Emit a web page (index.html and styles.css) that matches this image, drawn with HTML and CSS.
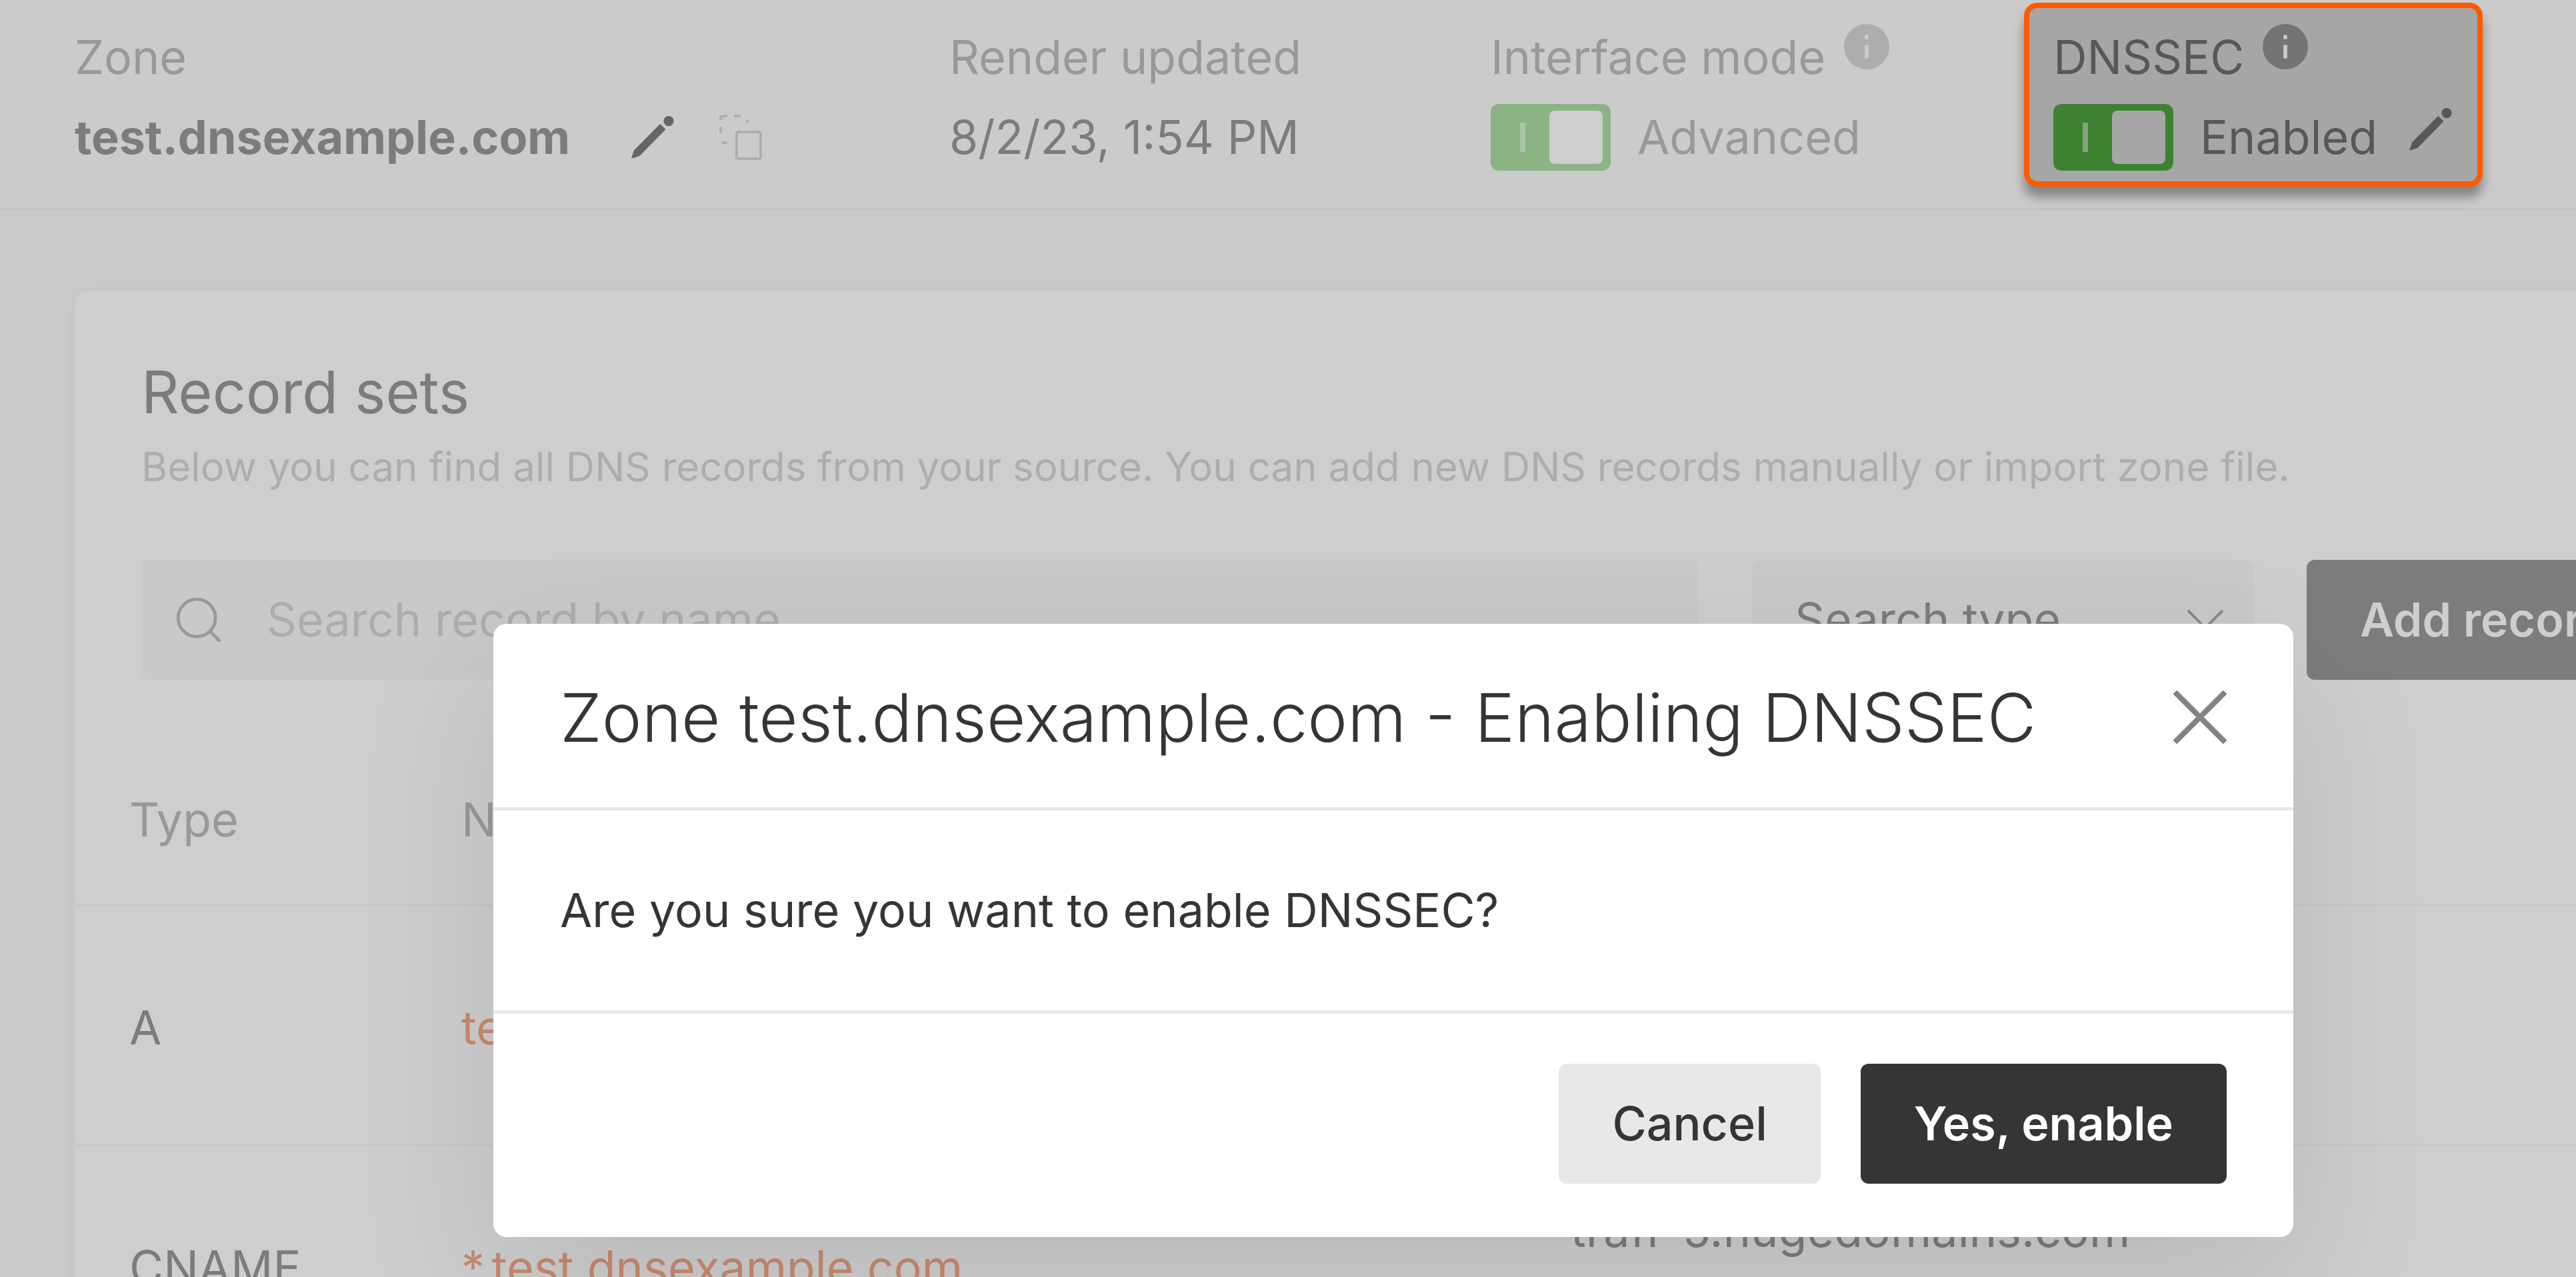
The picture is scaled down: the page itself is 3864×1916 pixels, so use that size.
FILE: index.html
```html
<!DOCTYPE html>
<html lang="en">
<head>
<meta charset="utf-8">
<title>DNS zone - test.dnsexample.com</title>
<link rel="stylesheet" href="styles.css">
</head>
<body>
<svg class="sprite" aria-hidden="true">
  <symbol id="icon-pencil" viewBox="0 0 16 16"><path d="M0 16 1 12.9 10.8 3 12.9 5 3.1 15Z"/><circle cx="14" cy="1.9" r="1.9"/></symbol>
  <symbol id="icon-info" viewBox="0 0 17 17"><circle cx="8.5" cy="8.5" r="8.5"/><path class="info-mark" d="M7.8 4.1h1.4v1.6H7.8ZM7.8 7.9h1.4v5H7.8Z"/></symbol>
</svg>

<header class="zone-bar">
  <div class="field">
    <span class="label">Zone</span>
    <div class="row">
      <strong class="zone-name">test.dnsexample.com</strong>
      <button class="icon-btn edit" aria-label="Rename zone"><svg class="icon"><use href="#icon-pencil"/></svg></button>
      <button class="icon-btn copy" aria-label="Copy zone name">
        <svg class="icon" viewBox="0 0 16 17"><rect x="6.5" y="6.5" width="9" height="10" rx=".6"/><path d="M.5 2V1.5Q.5.5 1.5.5H3M5.5.5h2.5M10 2.5h1M.5 4.5V7M1 10.5h2"/></svg>
      </button>
    </div>
  </div>
  <div class="field">
    <span class="label">Render updated</span>
    <div class="row">8/2/23, 1:54 PM</div>
  </div>
  <div class="field muted">
    <span class="label">Interface mode <svg class="info"><use href="#icon-info"/></svg></span>
    <label class="row"><input class="toggle" type="checkbox" checked>Advanced</label>
  </div>
  <div class="field highlight">
    <span class="label">DNSSEC <svg class="info"><use href="#icon-info"/></svg></span>
    <div class="row">
      <label class="row"><input class="toggle" type="checkbox" checked>Enabled</label>
      <button class="icon-btn edit raised" aria-label="Edit DNSSEC"><svg class="icon"><use href="#icon-pencil"/></svg></button>
    </div>
  </div>
</header>

<main class="card">
  <h1 class="card-title">Record sets</h1>
  <p class="card-text">Below you can find all DNS records from your source. You can add new DNS records manually or import zone file.</p>
  <div class="toolbar">
    <div class="search">
      <svg class="search-icon" viewBox="0 0 17 17"><circle cx="7.8" cy="7.8" r="7"/><path d="m12.8 12.8 3.7 3.8"/></svg>
      <input class="search-input" type="text" placeholder="Search record by name" aria-label="Search record by name">
    </div>
    <div class="select-box">
      <select class="select" aria-label="Search type"><option>Search type</option></select>
      <svg class="chevron" viewBox="0 0 14 8"><path d="m.5.5 6.5 6.5 6.5-6.5"/></svg>
    </div>
    <button class="btn btn-add">Add record</button>
  </div>
  <table class="records">
    <thead>
      <tr><th class="col-type">Type</th><th class="col-name">Name</th><th>Content</th></tr>
    </thead>
    <tbody>
      <tr><td>A</td><td><a href="#">test.dnsexample.com</a></td><td></td></tr>
      <tr><td>CNAME</td><td><a href="#">*.test.dnsexample.com</a></td><td>traff-5.hugedomains.com<br>traff-6.hugedomains.com</td></tr>
    </tbody>
  </table>
</main>

<div class="overlay">
  <section class="modal" role="dialog" aria-labelledby="modal-title">
    <header class="modal-head">
      <h2 class="modal-title" id="modal-title">Zone test.dnsexample.com - Enabling DNSSEC</h2>
      <button class="close" aria-label="Close"><svg class="close-icon" viewBox="0 0 20 20"><path d="m.6.6 18.8 18.8M19.4.6.6 19.4"/></svg></button>
    </header>
    <p class="modal-body">Are you sure you want to enable DNSSEC?</p>
    <footer class="modal-foot">
      <button class="btn btn-light">Cancel</button>
      <button class="btn btn-dark">Yes, enable</button>
    </footer>
  </section>
</div>
</body>
</html>
```
FILE: styles.css
```css
* {
  box-sizing: border-box;
}

html {
  overflow: hidden;
}

body {
  position: relative;
  height: 100vh;
  margin: 0;
  overflow: hidden;
  background: #cacaca;
  color: #7c7c7c;
  font: 400 70px/120px Inter, "Liberation Sans", sans-serif;
}

button,
input,
select {
  margin: 0;
  padding: 0;
  border: 0;
  background: none;
  color: inherit;
  font: inherit;
}

.sprite {
  position: absolute;
  width: 0;
  height: 0;
}

/* Zone summary bar */

.zone-bar {
  display: grid;
  grid-template-columns: 1312px 812px 800px 688px;
  align-items: start;
  padding: 4px 0 32px 112px;
  border-bottom: 4px solid #c4c4c4;
  background: #cbcbcb;
}

.field {
  padding-top: 22px;
  white-space: nowrap;
}

.label {
  display: flex;
  gap: 28px;
  color: #999;
}

.row {
  display: flex;
  align-items: center;
}

.zone-name {
  font-weight: 700;
}

.muted {
  color: #999;
}

.highlight {
  height: 276px;
  padding: 14px 36px 0;
  border: 8px solid #ff5a00;
  border-radius: 20px;
  background: #a6a6a6;
  box-shadow: 0 16px 16px rgba(0, 0, 0, .35);
  color: #585858;
}

.highlight .label {
  color: inherit;
}

.info {
  width: 68px;
  height: 68px;
  margin-top: 10px;
  fill: #adadad;
}

.info-mark {
  fill: #cbcbcb;
}

.highlight .info {
  fill: #747474;
}

.highlight .info-mark {
  fill: #a6a6a6;
}

.toggle {
  display: flex;
  align-items: center;
  justify-content: space-between;
  width: 180px;
  height: 100px;
  margin-right: 40px;
  padding: 0 12px 0 44px;
  border-radius: 12px;
  appearance: none;
  background: #8bb384;
}

.toggle::before {
  width: 8px;
  height: 44px;
  background: #adc4a9;
  content: "";
}

.toggle::after {
  width: 80px;
  height: 80px;
  border-radius: 8px;
  background: #cecece;
  content: "";
}

.highlight .toggle {
  background: #3d8231;
}

.highlight .toggle::before {
  background: #85a37f;
}

.highlight .toggle::after {
  background: #a6a6a6;
}

.icon-btn {
  display: flex;
}

.icon {
  width: 64px;
  height: 68px;
}

.edit {
  margin-left: 92px;
  fill: #656565;
}

.copy {
  margin-left: 68px;
  fill: none;
  stroke: #aeaeae;
}

.raised {
  margin: 0 0 24px 48px;
  fill: #585858;
}

/* Records card */

.card {
  margin: 120px -232px 0 112px;
  padding: 92px 100px 0;
  border-radius: 20px 0 0 0;
  background: #cecece;
  box-shadow: 0 0 16px rgba(0, 0, 0, .04);
}

.card-title {
  margin: 0;
  font-size: 88px;
  font-weight: 400;
  line-height: 120px;
}

.card-text {
  margin: 0 0 88px;
  color: #adadad;
  font-size: 60px;
  line-height: 104px;
  white-space: nowrap;
}

.toolbar {
  display: flex;
  gap: 80px;
}

.search {
  display: flex;
  flex: 1;
  align-items: center;
  gap: 68px;
  height: 180px;
  padding: 0 52px;
  border-radius: 12px;
  background: #c9c9c9;
}

.search-icon {
  flex: none;
  width: 68px;
  height: 68px;
  fill: none;
  stroke: #999;
  stroke-width: 1.2;
}

.search-input {
  flex: 1;
  height: 120px;
}

.search-input::placeholder {
  color: #adadad;
  opacity: 1;
}

.select-box {
  display: grid;
  align-items: center;
  width: 752px;
  border-radius: 12px;
  background: #c9c9c9;
}

.select {
  grid-area: 1 / 1;
  height: 180px;
  padding-left: 64px;
  appearance: none;
}

.chevron {
  grid-area: 1 / 1;
  justify-self: end;
  width: 56px;
  height: 32px;
  margin-right: 44px;
  fill: none;
  stroke: #8a8a8a;
}

.btn {
  height: 180px;
  padding: 0 80px;
  border-radius: 12px;
  white-space: nowrap;
}

.btn-add {
  width: 536px;
  background: #7c7c7c;
  color: #cecece;
  font-weight: 600;
  text-align: left;
}

.records {
  width: calc(100% + 200px);
  margin: 150px -100px 0;
  border-spacing: 0;
  table-layout: fixed;
  text-align: left;
}

.records th {
  padding: 0 0 66px;
  border-bottom: 4px solid #c8c8c8;
  color: #999;
  font-weight: 400;
}

.records td {
  height: 360px;
  padding: 8px 0 0;
  border-bottom: 4px solid #c8c8c8;
  line-height: 112px;
  vertical-align: middle;
}

.records th:first-child,
.records td:first-child {
  padding-left: 82px;
}

.records a {
  color: #c98a70;
  text-decoration: none;
}

.col-type {
  width: 580px;
}

.col-name {
  width: 1664px;
}

/* Confirmation dialog */

.overlay {
  position: absolute;
  inset: 0;
  padding: 936px 424px 0 740px;
}

.modal {
  border-radius: 20px;
  background: #fff;
  box-shadow: 0 80px 220px rgba(0, 0, 0, .1);
  color: #353535;
}

.modal-head {
  display: flex;
  align-items: center;
  justify-content: space-between;
  padding: 80px 100px 75px;
  border-bottom: 5px solid #e8e8e8;
}

.modal-title {
  margin: 0;
  font-size: 101px;
  font-weight: 300;
  line-height: 120px;
  white-space: nowrap;
}

.close {
  display: flex;
}

.close-icon {
  width: 80px;
  height: 80px;
  fill: none;
  stroke: #828282;
  stroke-width: 2;
}

.modal-body {
  margin: 0;
  padding: 90px 100px;
}

.modal-foot {
  display: flex;
  justify-content: flex-end;
  gap: 60px;
  padding: 75px 100px 80px;
  border-top: 5px solid #e8e8e8;
}

.btn-light {
  background: #e8e8e8;
  font-weight: 500;
}

.btn-dark {
  background: #353535;
  color: #fff;
  font-weight: 600;
}
```
